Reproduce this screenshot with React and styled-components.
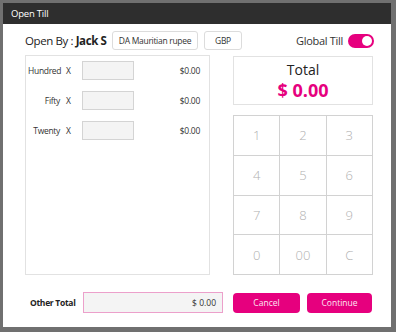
import React, { useState } from 'react';
import styled, { createGlobalStyle } from 'styled-components';

const PINK = '#e6007e';

const GlobalStyle = createGlobalStyle`
  html, body {
    margin: 0;
    padding: 0;
    background: #707070;
    font-family: "Open Sans", "Noto Sans", sans-serif;
  }
`;

const Backdrop = styled.div`
  width: 396px;
  height: 332px;
  padding: 3px 5px 5px 3px;
  box-sizing: border-box;
`;

const Modal = styled.div`
  width: 388px;
  height: 324px;
  background: #fff;
  display: flex;
  flex-direction: column;
`;

const Header = styled.div`
  height: 21px;
  background: #2e2e2e;
  color: #fff;
  font-size: 9.5px;
  letter-spacing: -0.2px;
  display: flex;
  align-items: center;
  padding-left: 8px;
`;

const Body = styled.div`
  flex: 1;
  padding: 7px 17px 14px 22px;
  display: flex;
  flex-direction: column;
  white-space: nowrap;
`;

const TopRow = styled.div`
  display: flex;
  align-items: center;
  height: 19px;
`;

const OpenBy = styled.div`
  font-size: 11.5px;
  letter-spacing: -0.4px;
  color: #222;
  width: 87px;
  b { font-weight: 700; }
`;

const Chip = styled.div`
  height: 19px;
  box-sizing: border-box;
  border: 1px solid #dcdcdc;
  border-radius: 3px;
  font-size: 8.5px;
  letter-spacing: -0.3px;
  color: #333;
  display: flex;
  align-items: center;
  justify-content: center;
  width: ${p => p.$w}px;
  margin-right: 6px;
`;

const GlobalTill = styled.div`
  margin-left: auto;
  display: flex;
  align-items: center;
  gap: 5px;
  font-size: 11px;
  letter-spacing: -0.3px;
  color: #333;
`;

const Toggle = styled.div`
  width: 26px;
  height: 14px;
  border-radius: 7px;
  background: ${PINK};
  position: relative;
  &::after {
    content: '';
    position: absolute;
    right: 2px;
    top: 2px;
    width: 10px;
    height: 10px;
    border-radius: 50%;
    background: #fff;
  }
`;

const Main = styled.div`
  display: grid;
  grid-template-columns: 185px 140px;
  column-gap: 23px;
  margin-top: 5px;
  height: 220px;
`;

const Denoms = styled.div`
  border: 1px solid #e2e2e2;
  padding: 5px 9px 0 2px;
  display: flex;
  flex-direction: column;
  gap: 11px;
`;

const DenomRow = styled.div`
  display: flex;
  align-items: center;
  height: 19px;
  font-size: 8.5px;
  letter-spacing: -0.3px;
  color: #333;
`;

const DenomLabel = styled.span`
  width: 32px;
  text-align: right;
`;

const Times = styled.span`
  margin-left: 6px;
  width: 16px;
`;

const CountInput = styled.div`
  width: 52px;
  height: 19px;
  box-sizing: border-box;
  border: 1px solid #d4d4d4;
  background: #f4f4f4;
`;

const Amount = styled.span`
  margin-left: auto;
`;

const Side = styled.div`
  display: flex;
  flex-direction: column;
  gap: 10px;
`;

const TotalBox = styled.div`
  height: 49px;
  margin-top: 1px;
  box-sizing: border-box;
  border: 1px solid #e2e2e2;
  display: flex;
  flex-direction: column;
  align-items: center;
  justify-content: center;
`;

const TotalLabel = styled.div`
  font-size: 14px;
  color: #222;
  line-height: 18px;
`;

const TotalValue = styled.div`
  font-size: 18px;
  font-weight: 700;
  color: ${PINK};
  line-height: 22px;
`;

const Keypad = styled.div`
  flex: 1;
  display: grid;
  grid-template-columns: repeat(3, 1fr);
  grid-template-rows: repeat(4, 1fr);
  gap: 1px;
  background: #d2d2d2;
  border: 1px solid #d2d2d2;
`;

const Key = styled.div`
  background: #fff;
  color: #b0b0b0;
  font-size: 13px;
  font-weight: 300;
  display: flex;
  align-items: center;
  justify-content: center;
`;

const BottomRow = styled.div`
  display: flex;
  align-items: center;
  margin-top: auto;
  height: 21px;
`;

const OtherLabel = styled.span`
  font-size: 8.5px;
  font-weight: 700;
  letter-spacing: -0.3px;
  color: #222;
  margin-left: 5px;
  width: 53px;
`;

const OtherInput = styled.div`
  width: 140px;
  height: 21px;
  box-sizing: border-box;
  border: 1px solid #eca0cb;
  background: #f4f4f4;
  font-size: 8.5px;
  color: #333;
  display: flex;
  align-items: center;
  justify-content: flex-end;
  padding-right: 6px;
`;

const Button = styled.button`
  height: 20px;
  width: ${p => p.$w}px;
  margin-left: ${p => p.$ml}px;
  border: none;
  border-radius: 4px;
  background: ${PINK};
  color: #fde6f2;
  font-family: inherit;
  font-size: 8.5px;
  padding: 0;
`;

const denominations = ['Hundred', 'Fifty', 'Twenty'];
const keys = ['1', '2', '3', '4', '5', '6', '7', '8', '9', '0', '00', 'C'];

export default function App() {
  const [globalTill] = useState(true);
  return (
    <>
      <GlobalStyle />
      <Backdrop>
        <Modal>
          <Header>Open Till</Header>
          <Body>
            <TopRow>
              <OpenBy>Open By : <b>Jack S</b></OpenBy>
              <Chip $w={86}>DA Mauritian rupee</Chip>
              <Chip $w={38}>GBP</Chip>
              <GlobalTill>
                Global Till
                {globalTill && <Toggle />}
              </GlobalTill>
            </TopRow>
            <Main>
              <Denoms>
                {denominations.map(d => (
                  <DenomRow key={d}>
                    <DenomLabel>{d}</DenomLabel>
                    <Times>X</Times>
                    <CountInput />
                    <Amount>$0.00</Amount>
                  </DenomRow>
                ))}
              </Denoms>
              <Side>
                <TotalBox>
                  <TotalLabel>Total</TotalLabel>
                  <TotalValue>$ 0.00</TotalValue>
                </TotalBox>
                <Keypad>
                  {keys.map(k => <Key key={k}>{k}</Key>)}
                </Keypad>
              </Side>
            </Main>
            <BottomRow>
              <OtherLabel>Other Total</OtherLabel>
              <OtherInput>$ 0.00</OtherInput>
              <Button $w={67} $ml={10}>Cancel</Button>
              <Button $w={65} $ml={7}>Continue</Button>
            </BottomRow>
          </Body>
        </Modal>
      </Backdrop>
    </>
  );
}
